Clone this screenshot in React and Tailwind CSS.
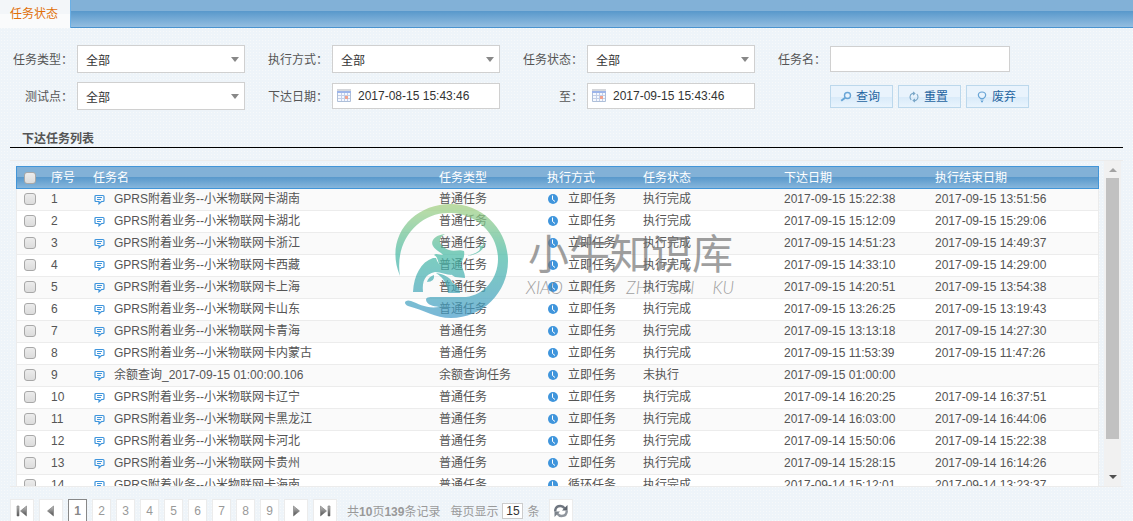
const ALL = '全部';

const TASKS = [
  ['GPRS附着业务--小米物联网卡湖南', '普通任务', '立即任务', '执行完成', '2017-09-15 15:22:38', '2017-09-15 13:51:56'],
  ['GPRS附着业务--小米物联网卡湖北', '普通任务', '立即任务', '执行完成', '2017-09-15 15:12:09', '2017-09-15 15:29:06'],
  ['GPRS附着业务--小米物联网卡浙江', '普通任务', '立即任务', '执行完成', '2017-09-15 14:51:23', '2017-09-15 14:49:37'],
  ['GPRS附着业务--小米物联网卡西藏', '普通任务', '立即任务', '执行完成', '2017-09-15 14:33:10', '2017-09-15 14:29:00'],
  ['GPRS附着业务--小米物联网卡上海', '普通任务', '立即任务', '执行完成', '2017-09-15 14:20:51', '2017-09-15 13:54:38'],
  ['GPRS附着业务--小米物联网卡山东', '普通任务', '立即任务', '执行完成', '2017-09-15 13:26:25', '2017-09-15 13:19:43'],
  ['GPRS附着业务--小米物联网卡青海', '普通任务', '立即任务', '执行完成', '2017-09-15 13:13:18', '2017-09-15 14:27:30'],
  ['GPRS附着业务--小米物联网卡内蒙古', '普通任务', '立即任务', '执行完成', '2017-09-15 11:53:39', '2017-09-15 11:47:26'],
  ['余额查询_2017-09-15 01:00:00.106', '余额查询任务', '立即任务', '未执行', '2017-09-15 01:00:00', ''],
  ['GPRS附着业务--小米物联网卡辽宁', '普通任务', '立即任务', '执行完成', '2017-09-14 16:20:25', '2017-09-14 16:37:51'],
  ['GPRS附着业务--小米物联网卡黑龙江', '普通任务', '立即任务', '执行完成', '2017-09-14 16:03:00', '2017-09-14 16:44:06'],
  ['GPRS附着业务--小米物联网卡河北', '普通任务', '立即任务', '执行完成', '2017-09-14 15:50:06', '2017-09-14 15:22:38'],
  ['GPRS附着业务--小米物联网卡贵州', '普通任务', '立即任务', '执行完成', '2017-09-14 15:28:15', '2017-09-14 16:14:26'],
  ['GPRS附着业务--小米物联网卡海南', '普通任务', '循环任务', '执行完成', '2017-09-14 15:12:01', '2017-09-14 13:23:37'],
];

const CommentIcon = () => (
  <svg width="11" height="11" viewBox="0 0 11 11" fill="none" stroke="#3f95dc" className="shrink-0">
    <path d="M2 1.5H9Q10 1.5 10 2.5V6.5Q10 7.5 9 7.5H7.5L5 9.8V7.5H2Q1 7.5 1 6.5V2.5Q1 1.5 2 1.5Z" strokeWidth="1.2" />
    <path d="M3 3.5H8M3 5.5H7" strokeWidth="1" />
  </svg>
);

const ClockIcon = () => (
  <svg width="10" height="10" viewBox="0 0 10 10" className="shrink-0">
    <circle cx="5" cy="5" r="5" fill="#3f95dc" />
    <path d="M4.5 1.5V5.5L7 7.5" fill="none" stroke="#fff" />
  </svg>
);

const CalendarIcon = () => (
  <svg width="14" height="13" viewBox="0 0 14 13" className="pointer-events-none absolute left-[5px] top-[6px]">
    <rect width="14" height="13" rx="1" fill="#aebfd9" />
    <rect width="14" height="3" fill="#d4d6da" />
    <rect x="0" y="2" width="14" height="2" fill="#9db5ea" />
    <rect x="1" y="4" width="12" height="8" fill="#f5f8fe" />
    <path d="M1 6.5H13M1 9.5H13M4.5 4V12M7.5 4V12M10.5 4V12" stroke="#c3cfe8" />
    <rect x="8" y="7" width="3" height="3" fill="#f0a28e" />
  </svg>
);

const SearchIcon = () => (
  <svg width="12" height="12" viewBox="0 0 12 12" fill="none" stroke="#69a5d6">
    <circle cx="7.5" cy="4.5" r="3" strokeWidth="1.4" />
    <path d="M5.2 6.7L1.2 9.8" strokeWidth="2" />
  </svg>
);

const ResetIcon = () => (
  <svg width="12" height="12" viewBox="0 0 12 12" fill="none" stroke="#7ba7c8" strokeWidth="1.1">
    <path d="M6.5 2.5H4.2Q2 3.5 2 6Q2 7.6 3.2 8.8M5 1L6.8 2.5L5 4M5.5 9.5H7.8Q10 8.5 10 6Q10 4.4 8.8 3.2M7 8L5.2 9.5L7 11" />
  </svg>
);

const BulbIcon = () => (
  <svg width="12" height="12" viewBox="0 0 12 12" fill="none" stroke="#69a5d6">
    <path d="M4.5 7.5Q2.3 6 2.3 4Q2.6 1 6 1Q9.4 1 9.7 4Q9.7 6 7.5 7.5Z" strokeWidth="1.2" />
    <path d="M4.5 9H7.5M5 10.7H7" strokeWidth="1.2" />
  </svg>
);

const PagerIcon = ({ d }) => (
  <svg width="12" height="12" viewBox="0 0 12 12">
    <defs>
      <linearGradient id="metal" x1="0" y1="0" x2="0" y2="1">
        <stop offset="0" stopColor="#c4c4c4" />
        <stop offset="1" stopColor="#4c4c4c" />
      </linearGradient>
    </defs>
    <path d={d} fill="url(#metal)" stroke="#777" strokeWidth="0.6" />
  </svg>
);

const RefreshIcon = () => (
  <svg width="16" height="14" viewBox="0 0 16 14" fill="none" stroke="#6f7680" strokeWidth="2.4">
    <path d="M2.2 7.5Q2.2 2 7.5 2Q10 2 11.6 4.2" />
    <path d="M13.8 6.5Q13.8 12 8.5 12Q6 12 4.4 9.8" stroke="#8f959d" />
    <path d="M9 6.5H14.5V1Z" fill="#5c636d" stroke="none" />
    <path d="M7 7.5H1.5V13Z" fill="#7b828b" stroke="none" />
  </svg>
);

const Watermark = () => (
  <div className="pointer-events-none absolute left-[392px] top-[202px] flex items-start opacity-70">
    <svg width="118" height="118" viewBox="0 0 118 118">
      <defs>
        <linearGradient id="ring" gradientUnits="userSpaceOnUse" x1="0" y1="0" x2="0" y2="118">
          <stop offset="0" stopColor="#a9d17c" />
          <stop offset="0.45" stopColor="#45b9a4" />
          <stop offset="1" stopColor="#4299ca" />
        </linearGradient>
      </defs>
      <g fill="url(#ring)">
        <path d="M8 74C-8 36 20 2 59 2C91 2 116 28 116 59C116 91 90 116 59 116C43 116 32 108 16 104C10 101 14 97 19 99C27 102 35 107 47 105C41 104 35 103 34 98C34 95 37 95 41 95H74C92 93 106 77 106 57C106 31 84 12 59 11C28 9 2 38 8 74Z" />
        <path d="M53 32C43 33 38 39 41 44C44 49 49 50 51 53C47 53 44 51 42 53C47 55 45 62 50 66C55 70 59 72 63 75L73 76C73 69 69 66 69 61C71 58 73 54 72 49C67 47 63 50 57 48C48 45 44 37 53 32Z" />
        <path d="M41 56C29 60 22 73 21 90H31C30 79 33 72 43 70C49 70 54 73 60 73C54 67 46 64 44 56Z" />
        <path d="M44 71C52 72 59 76 60 80C64 83 68 86 68 91H56C55 83 53 77 44 71ZM35 80Q36 75 42 73Q43 80 35 80Z" />
        <path d="M90 35C96 44 90 52 75 54C86 51 92 47 85 43C93 46 92 41 90 35Z" />
      </g>
    </svg>
    <div className="ml-4 mt-6 text-[#777]">
      <div className="pl-[2px] text-[41px] leading-[50px] [font-family:'Noto_Sans_CJK_SC',sans-serif]">小牛知识库</div>
      <div className="flex w-[208px] justify-between text-[17px] font-light italic leading-6 [font-family:Lato,sans-serif]">
        <span>XIAO</span>
        <span>NIU</span>
        <span>ZHI</span>
        <span>SHI</span>
        <span>KU</span>
      </div>
    </div>
  </div>
);

const Label = ({ htmlFor, children }) => (
  <label htmlFor={htmlFor} className="pt-[2px] text-right">
    {children}：
  </label>
);

const SelectField = ({ id, label }) => (
  <>
    <Label htmlFor={id}>{label}</Label>
    <div className="relative">
      <select id={id} className="block h-7 w-full appearance-none rounded-none border border-[#d0d0d0] bg-white pl-2 pt-[3px] text-xs text-[#333]">
        <option>{ALL}</option>
      </select>
      <span className="pointer-events-none absolute right-[6px] top-3 border-x-4 border-t-5 border-x-transparent border-t-[#888]" />
    </div>
  </>
);

const DateField = ({ id, label, value }) => (
  <>
    <Label htmlFor={id}>{label}</Label>
    <div className="relative">
      <input id={id} type="text" defaultValue={value} className="block h-[26px] w-full border border-[#d0d0d0] bg-white pl-[25px] text-xs text-[#333]" />
      <CalendarIcon />
    </div>
  </>
);

const ToolButton = ({ icon, children }) => (
  <button
    type="button"
    className="flex h-[23px] w-[63px] items-center gap-1 border border-[#bcd8ec] bg-[linear-gradient(#e9f3fc_50%,#d8eaf9_50%,#e9f4fd)] pl-[9px] pt-px text-xs text-[#1f64a0]"
  >
    {icon}
    {children}
  </button>
);

const CheckBox = ({ label }) => (
  <input
    type="checkbox"
    aria-label={label}
    className="block size-3 appearance-none rounded-[3px] border border-[#a8a8a8] bg-linear-to-b from-[#ececec] to-[#dcdcdc]"
  />
);

const PagerButton = ({ label, d }) => (
  <button type="button" aria-label={label} className="flex h-6 w-6 items-center justify-center border border-[#ececec] bg-white">
    <PagerIcon d={d} />
  </button>
);

const PageNumber = ({ page, active }) => (
  <button
    type="button"
    className={
      active
        ? 'h-6 w-[19px] border border-[#888] bg-white font-bold text-[#888]'
        : 'h-6 w-[19px] border border-[#ececec] bg-white text-[#999]'
    }
  >
    {page}
  </button>
);

const App = () => {
  return (
    <div className="relative h-screen overflow-hidden bg-[#eef4f9] bg-[radial-gradient(#f7f9fa_1px,transparent_1px)] bg-size-[3px_3px] text-xs text-[#555] [font-family:'Liberation_Sans','Noto_Sans_CJK_SC',sans-serif]">
      <nav className="flex h-7 border-b border-[#4a93cf] bg-[linear-gradient(#82b1d7_11px,#5898cb_11px,#93bde0)]">
        <a href="#status" className="-mb-px flex w-[71px] items-center border-r border-[#6bb0e6] bg-[linear-gradient(#f3f6f9_50%,#fafbfc_50%)] pl-[10px] text-[#e17009]">
          任务状态
        </a>
      </nav>

      <form className="grid grid-cols-[73px_168px_79px_168px_79px_168px_67px_minmax(0,1fr)] items-center gap-x-1 gap-y-[9px] pt-[17px]">
        <SelectField id="type" label="任务类型" />
        <SelectField id="mode" label="执行方式" />
        <SelectField id="state" label="任务状态" />
        <Label htmlFor="name">任务名</Label>
        <input id="name" type="text" className="h-[26px] w-[180px] border border-[#d0d0d0] bg-white px-2" />
        <SelectField id="point" label="测试点" />
        <DateField id="from" label="下达日期" value="2017-08-15 15:43:46" />
        <DateField id="to" label="至" value="2017-09-15 15:43:46" />
        <span />
        <div className="flex gap-[5px]">
          <ToolButton icon={<SearchIcon />}>查询</ToolButton>
          <ToolButton icon={<ResetIcon />}>重置</ToolButton>
          <ToolButton icon={<BulbIcon />}>废弃</ToolButton>
        </div>
      </form>

      <h2 className="mx-[10px] mt-5 h-[18px] border-b border-black pl-3 font-bold leading-[18px] text-[#555]">下达任务列表</h2>

      <div className="mx-[10px] mt-3 flex h-[327px] border-y border-[#ececec] pl-[6px]">
        <div className="flex-1 overflow-hidden pt-[5px]">
          <table className="w-full table-fixed border-separate border-spacing-0">
            <colgroup>
              <col className="w-[35px]" />
              <col className="w-[42px]" />
              <col />
              <col className="w-[108px]" />
              <col className="w-[96px]" />
              <col className="w-[141px]" />
              <col className="w-[151px]" />
              <col className="w-[164px]" />
            </colgroup>
            <thead>
              <tr className="h-[23px] bg-[linear-gradient(#82b1d7_11px,#5898cb_11px,#8bb9de)] text-left text-white *:border-y *:border-[#4295d8] *:p-0 *:font-normal *:leading-5">
                <th className="border-l">
                  <div className="pl-[7px]">
                    <CheckBox label="全选" />
                  </div>
                </th>
                <th>序号</th>
                <th>任务名</th>
                <th>任务类型</th>
                <th>执行方式</th>
                <th>任务状态</th>
                <th>下达日期</th>
                <th className="border-r">执行结束日期</th>
              </tr>
            </thead>
            <tbody>
              {TASKS.map(([name, type, mode, state, start, end], i) => (
                <tr key={i} className="h-[22px] bg-white odd:bg-[#fafafa] *:border-b *:border-[#ececec] *:p-0 *:align-top *:leading-5">
                  <td className="border-l">
                    <div className="pl-[7px] pt-1">
                      <CheckBox label={name} />
                    </div>
                  </td>
                  <td>{i + 1}</td>
                  <td>
                    <div className="flex items-center gap-[9px] pl-px">
                      <CommentIcon />
                      {name}
                    </div>
                  </td>
                  <td>{type}</td>
                  <td>
                    <div className="flex items-center gap-[10px] pl-px">
                      <ClockIcon />
                      {mode}
                    </div>
                  </td>
                  <td>{state}</td>
                  <td>{start}</td>
                  <td className="border-r">{end}</td>
                </tr>
              ))}
            </tbody>
          </table>
        </div>
        <div className="ml-[5px] mr-[2px] flex w-[17px] flex-col items-center justify-between bg-[#f1f1f1]">
          <span className="mt-[7px] border-x-4 border-b-4 border-x-transparent border-b-[#a3a3a3]" />
          <span className="mb-9 mt-[6px] w-[13px] flex-1 bg-[#c1c1c1]" />
          <span className="mb-[7px] border-x-4 border-t-4 border-x-transparent border-t-[#505050]" />
        </div>
      </div>

      <div className="ml-[10px] mt-3 flex items-center text-[#999]">
        <div className="flex gap-[5px]">
          <PagerButton label="首页" d="M1 1H3V11H1ZM10.5 1V11L4.5 6Z" />
          <PagerButton label="上一页" d="M8.5 1V11L2.5 6Z" />
          {[1, 2, 3, 4, 5, 6, 7, 8, 9].map((page) => (
            <PageNumber key={page} page={page} active={page === 1} />
          ))}
          <PagerButton label="下一页" d="M3.5 1V11L9.5 6Z" />
          <PagerButton label="末页" d="M1.5 1V11L7.5 6ZM9 1H11V11H9Z" />
        </div>
        <span className="ml-[10px] pt-px">
          共<b>10</b>页<b>139</b>条记录
        </span>
        <label htmlFor="size" className="ml-[10px] pt-px">每页显示</label>
        <input id="size" type="text" defaultValue="15" className="mx-1 h-4 w-[21px] border border-[#ccc] bg-white text-center text-[#333]" />
        <span className="pt-px">条</span>
        <button type="button" aria-label="刷新" className="ml-[10px] flex h-6 w-6 items-center justify-center border border-[#ececec] bg-white">
          <RefreshIcon />
        </button>
      </div>

      <Watermark />
    </div>
  );
};

export default App;
